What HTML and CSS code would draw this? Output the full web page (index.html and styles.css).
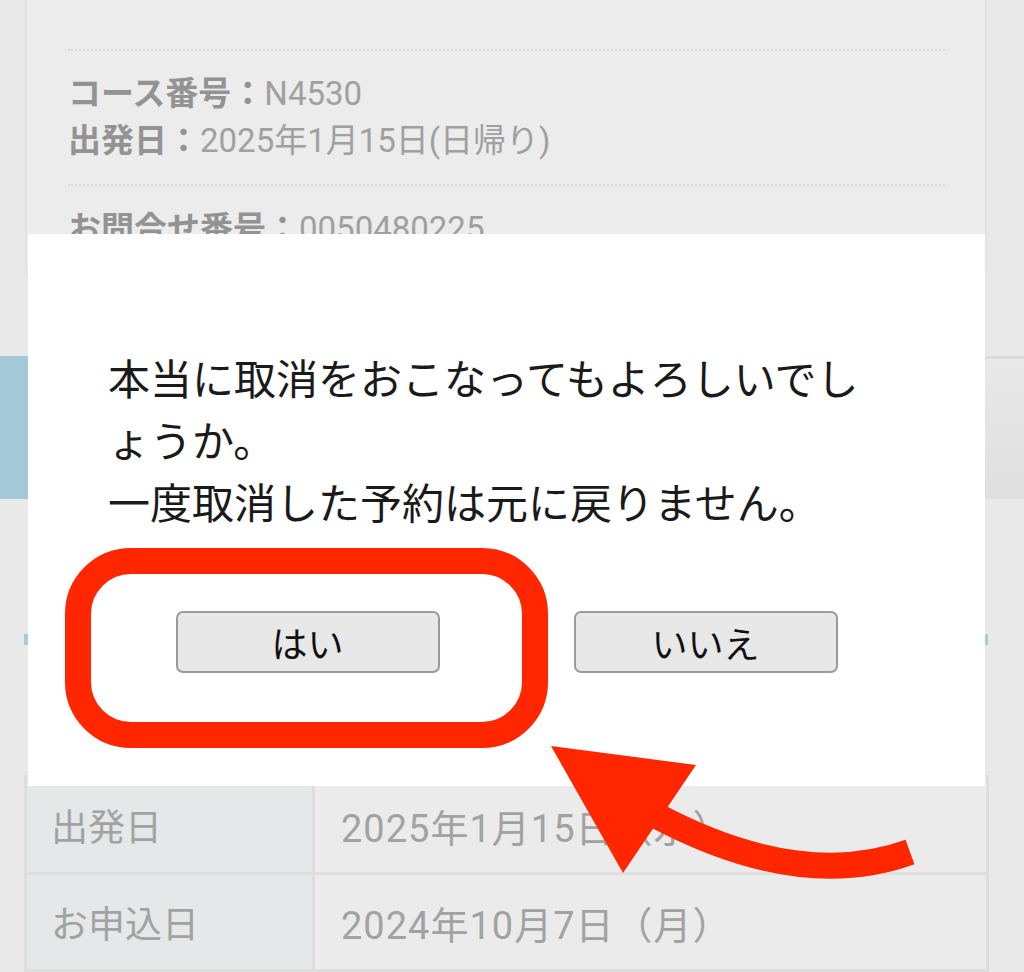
FILE: index.html
```html
<!DOCTYPE html>
<html lang="ja">
<head>
    <meta charset="UTF-8">
    <meta name="viewport" content="width=device-width, initial-scale=1.0">
    <link rel="stylesheet" href="styles.css">
</head>
<body>
    <div class="page">
        <section class="card">
            <div class="info">
                <p><b>コース番号：</b>N4530</p>
                <p><b>出発日：</b>2025年1月15日(日帰り)</p>
            </div>
            <div class="info">
                <p><b>お問合せ番号：</b>0050480225</p>
            </div>
        </section>

        <div class="tabs">
            <div class="tab tab-active"></div>
            <div class="tab"></div>
        </div>

        <div class="section-title"></div>

        <table class="detail">
            <tr>
                <th>出発日</th>
                <td>2025年1月15日（水）</td>
            </tr>
            <tr>
                <th>お申込日</th>
                <td>2024年10月7日（月）</td>
            </tr>
        </table>
    </div>

    <div class="modal">
        <p class="modal-text">本当に取消をおこなってもよろしいでしょうか。<br>一度取消した予約は元に戻りません。</p>
        <div class="modal-buttons">
            <button class="modal-button">はい</button>
            <button class="modal-button">いいえ</button>
        </div>
    </div>

    <!-- annotation: red frame + arrow -->
    <div class="mark"></div>
    <svg class="arrow" width="1024" height="972" viewBox="0 0 1024 972">
        <path d="M910 852 Q800 892 655 815" fill="none" stroke="#ff2600" stroke-width="26"/>
        <polygon points="551,746 696,765 623,873" fill="#ff2600"/>
    </svg>
</body>
</html>
```

FILE: styles.css
```css
* {
    margin: 0;
    padding: 0;
    box-sizing: border-box;
}

body {
    width: 1024px;
    height: 972px;
    overflow: hidden;
    position: relative;
    background: #e9e9e9;
    font-family: 'Noto Sans CJK JP', 'Noto Sans', sans-serif;
}

.page {
    width: 1024px;
    font-family: Roboto, 'Noto Sans CJK JP', sans-serif;
}

.card {
    margin: -12px 39px 0 27px;
    padding: 61px 40px 0 41px;
    background: #ececec;
    box-shadow: 0 1px 4px rgba(0, 0, 0, 0.08);
}

.info {
    border-top: 2px dotted #dadada;
    padding: 19px 0 20px;
    font-size: 33px;
    line-height: 47px;
    color: #a0a0a0;
}

.info b {
    color: #939393;
}

.tabs {
    display: flex;
    margin-top: 84px;
    height: 143px;
}

.tab {
    flex: 1;
    background: linear-gradient(#e9e9e9, #dfdfdf);
    border-top: 3px solid #dcdcdc;
}

.tab-active {
    background: #a3c8d6;
    border-top: none;
}

.section-title {
    margin: 135px 36px 0 24px;
    height: 11px;
    background: #a6ccd9;
}

.detail {
    margin: 130px 0 0 24px;
    width: 965px;
    border-collapse: separate;
    border-spacing: 3px;
    background: #dedede;
    font-size: 37px;
    color: #a2a2a2;
    text-align: left;
}

.detail th,
.detail td {
    height: 94px;
    padding: 0 26px;
    font-weight: normal;
}

.detail th {
    width: 285px;
    padding-left: 24px;
    background: #e4e8e8;
}

.detail td {
    font-size: 38px;
    letter-spacing: 1px;
    background: #ebebeb;
}

.modal {
    position: absolute;
    top: 234px;
    left: 28px;
    width: 957px;
    height: 552px;
    padding: 112px 80px 0;
    background: #fff;
    color: #1a1a1a;
}

.modal-text {
    padding-right: 20px;
    font-size: 42px;
    line-height: 62px;
    line-break: loose;
}

.modal-buttons {
    display: flex;
    justify-content: center;
    gap: 134px;
    margin-top: 79px;
}

.modal-button {
    width: 264px;
    height: 62px;
    border: 2px solid #9b9b9b;
    border-radius: 7px;
    background: #e8e8e8;
    color: #111;
    font-family: inherit;
    font-size: 36px;
}

.mark {
    position: absolute;
    left: 65px;
    top: 548px;
    width: 483px;
    height: 200px;
    border: 26px solid #ff2600;
    border-radius: 66px;
}

.arrow {
    position: absolute;
    left: 0;
    top: 0;
    pointer-events: none;
}
```
